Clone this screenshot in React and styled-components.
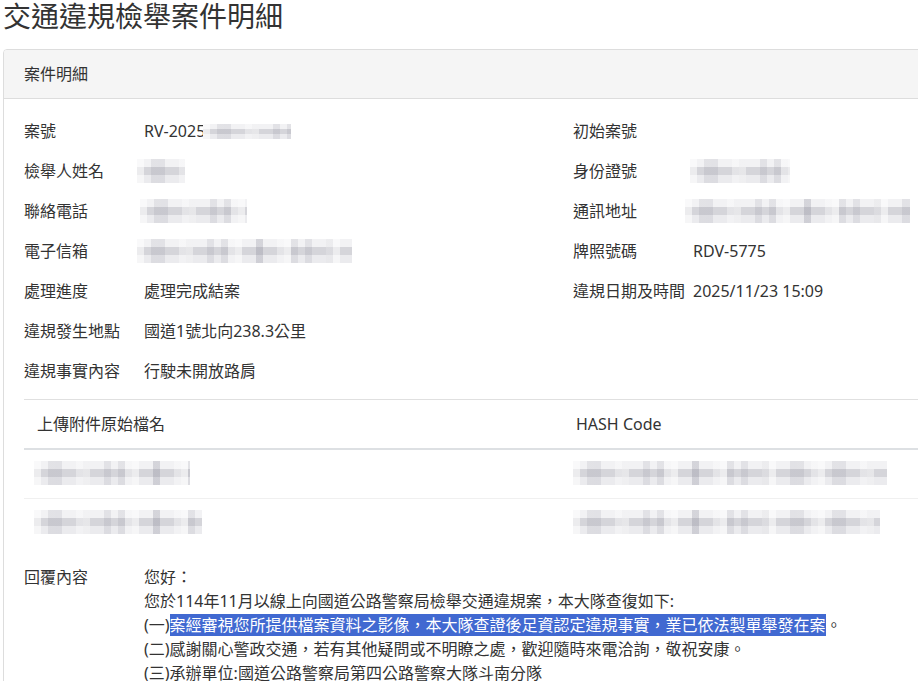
import React from "react";
import styled, { createGlobalStyle } from "styled-components";

const Global = createGlobalStyle`
  html, body { margin: 0; padding: 0; background: #fff; overflow: hidden; }
  body {
    font-family: "Noto Sans", "Noto Sans CJK TC", sans-serif;
    color: #333;
    font-size: 16px;
  }
`;

const Page = styled.div`
  padding-left: 3px;
  width: 1140px;
`;

const Title = styled.h1`
  margin: 0 0 17px;
  font-size: 28px;
  line-height: 32px;
  font-weight: 400;
  color: #333;
`;

const Panel = styled.section`
  border: 1px solid #ddd;
  border-radius: 4px;
  background: #fff;
`;

const PanelHeading = styled.div`
  background: #f5f5f5;
  border-bottom: 1px solid #ddd;
  padding: 12px 20px;
  line-height: 24px;
  border-radius: 3px 3px 0 0;
`;

const PanelBody = styled.div`
  padding: 12px 20px 20px;
`;

const Fields = styled.div`
  display: grid;
  grid-template-columns: 549px 549px;
`;

const Field = styled.div`
  display: flex;
  align-items: center;
  height: 40px;
`;

const Label = styled.div`
  width: 120px;
  flex: none;
  line-height: 24px;
`;

const Value = styled.div`
  line-height: 24px;
  display: flex;
  align-items: center;
`;

const Mosaic = styled.span`
  display: inline-block;
  width: ${(p) => p.$w}px;
  height: ${(p) => p.$h || 24}px;
  margin-left: ${(p) => p.$ml || 0}px;
  background:
    repeating-linear-gradient(90deg,
      rgba(255,255,255,0.55) 0 7px,
      transparent 7px 21px,
      rgba(110,110,130,0.12) 21px 28px,
      transparent 28px 42px,
      rgba(255,255,255,0.35) 42px 49px),
    repeating-linear-gradient(90deg,
      transparent 0 14px,
      rgba(90,90,110,0.10) 14px 21px,
      transparent 21px 35px),
    linear-gradient(180deg,
      #f2f2f4 0 33%,
      #d5d5da 33% 66%,
      #ebebee 66% 100%);
`;

const Table = styled.table`
  width: 1098px;
  table-layout: fixed;
  border-collapse: collapse;
  margin-top: 8px;
  border-top: 1px solid #e0e0e0;
`;

const Th = styled.th`
  box-sizing: border-box;
  text-align: left;
  font-weight: 400;
  padding: 12px 12px 12px 13px;
  line-height: 24px;
  border-bottom: 2px solid #dde0e3;
  width: ${(p) => (p.$w ? `${p.$w}px` : "auto")};
`;

const Tr = styled.tr`
  border-top: ${(p) => (p.$striped ? "1px solid #f0f0f0" : "0")};
`;

const Td = styled.td`
  padding: 11px 10px 13px;
  vertical-align: middle;
  line-height: 24px;
`;

const CellInner = styled.div`
  display: flex;
  align-items: center;
  height: 24px;
`;

const Reply = styled.div`
  display: flex;
  margin-top: 18px;
`;

const ReplyText = styled.div`
  line-height: 24px;
`;

const Line = styled.div``;

const Selected = styled.span`
  background: #4169d1;
  color: #fff;
`;

export default function App() {
  return (
    <Page>
      <Global />
      <Title>交通違規檢舉案件明細</Title>
      <Panel>
        <PanelHeading>案件明細</PanelHeading>
        <PanelBody>
          <Fields>
            <Field>
              <Label>案號</Label>
              <Value>
                RV-2025<Mosaic $w={88} $h={15} $ml={-2} />
              </Value>
            </Field>
            <Field>
              <Label>初始案號</Label>
              <Value />
            </Field>
            <Field>
              <Label>檢舉人姓名</Label>
              <Value>
                <Mosaic $w={48} $ml={-7} />
              </Value>
            </Field>
            <Field>
              <Label>身份證號</Label>
              <Value>
                <Mosaic $w={100} $ml={-3} />
              </Value>
            </Field>
            <Field>
              <Label>聯絡電話</Label>
              <Value>
                <Mosaic $w={107} $ml={-4} />
              </Value>
            </Field>
            <Field>
              <Label>通訊地址</Label>
              <Value>
                <Mosaic $w={225} $ml={-8} />
              </Value>
            </Field>
            <Field>
              <Label>電子信箱</Label>
              <Value>
                <Mosaic $w={215} $ml={-7} />
              </Value>
            </Field>
            <Field>
              <Label>牌照號碼</Label>
              <Value>RDV-5775</Value>
            </Field>
            <Field>
              <Label>處理進度</Label>
              <Value>處理完成結案</Value>
            </Field>
            <Field>
              <Label>違規日期及時間</Label>
              <Value>2025/11/23 15:09</Value>
            </Field>
            <Field>
              <Label>違規發生地點</Label>
              <Value>國道1號北向238.3公里</Value>
            </Field>
            <Field />
            <Field>
              <Label>違規事實內容</Label>
              <Value>行駛未開放路肩</Value>
            </Field>
            <Field />
          </Fields>

          <Table>
            <thead>
              <tr>
                <Th $w={539}>上傳附件原始檔名</Th>
                <Th>HASH Code</Th>
              </tr>
            </thead>
            <tbody>
              <Tr>
                <Td>
                  <CellInner>
                    <Mosaic $w={156} />
                  </CellInner>
                </Td>
                <Td>
                  <CellInner>
                    <Mosaic $w={314} />
                  </CellInner>
                </Td>
              </Tr>
              <Tr $striped>
                <Td>
                  <CellInner>
                    <Mosaic $w={168} />
                  </CellInner>
                </Td>
                <Td>
                  <CellInner>
                    <Mosaic $w={307} />
                  </CellInner>
                </Td>
              </Tr>
            </tbody>
          </Table>

          <Reply>
            <Label>回覆內容</Label>
            <ReplyText>
              <Line>您好：</Line>
              <Line>您於114年11月以線上向國道公路警察局檢舉交通違規案，本大隊查復如下:</Line>
              <Line>
                (一)
                <Selected>
                  案經審視您所提供檔案資料之影像，本大隊查證後足資認定違規事實，業已依法製單舉發在案
                </Selected>
                。
              </Line>
              <Line>(二)感謝關心警政交通，若有其他疑問或不明瞭之處，歡迎隨時來電洽詢，敬祝安康。</Line>
              <Line>(三)承辦單位:國道公路警察局第四公路警察大隊斗南分隊</Line>
            </ReplyText>
          </Reply>
        </PanelBody>
      </Panel>
    </Page>
  );
}
